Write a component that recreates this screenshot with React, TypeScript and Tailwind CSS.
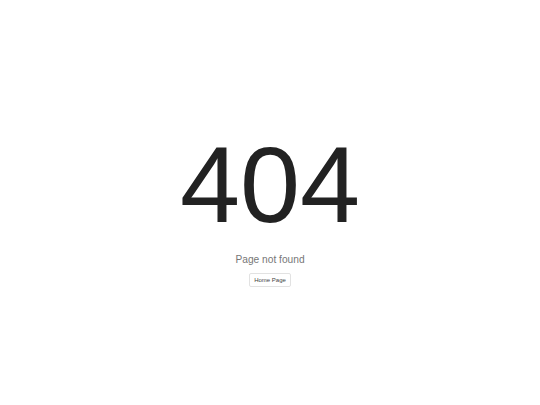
export default function App() {
    return (
        <div className="w-full h-[405px] bg-white flex flex-col items-center pt-[131px] font-['Liberation_Sans',Arial,sans-serif]">
            {/* Big code */}
            <h1 className="text-[108px] leading-none text-[#222222]">404</h1>

            {/* Message */}
            <p className="mt-[15px] text-[10.2px] leading-[12px] text-[#777777]">Page not found</p>

            {/* Action */}
            <button className="mt-[7px] h-[14px] px-[4px] flex items-center border border-[#e2e2e2] rounded-[2px] bg-white text-[6px] leading-none text-[#444444]">
                Home Page
            </button>
        </div>
    )
}
